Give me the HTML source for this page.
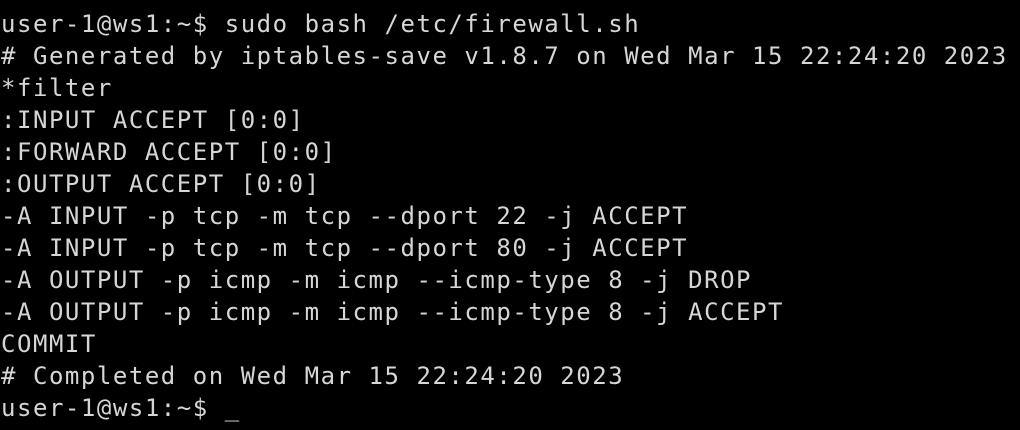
<!DOCTYPE html>
<html><head><meta charset="utf-8"><style>
html,body{margin:0;padding:0;background:#000;width:1020px;height:430px;overflow:hidden}
pre{margin:0;padding:8px 0 0 1px;font-family:"DejaVu Sans Mono","Liberation Mono",monospace;font-size:24px;letter-spacing:1.53px;line-height:32px;color:#d6d6d6;white-space:pre}
</style></head><body><pre>user-1@ws1:~$ sudo bash /etc/firewall.sh
# Generated by iptables-save v1.8.7 on Wed Mar 15 22:24:20 2023
*filter
:INPUT ACCEPT [0:0]
:FORWARD ACCEPT [0:0]
:OUTPUT ACCEPT [0:0]
-A INPUT -p tcp -m tcp --dport 22 -j ACCEPT
-A INPUT -p tcp -m tcp --dport 80 -j ACCEPT
-A OUTPUT -p icmp -m icmp --icmp-type 8 -j DROP
-A OUTPUT -p icmp -m icmp --icmp-type 8 -j ACCEPT
COMMIT
# Completed on Wed Mar 15 22:24:20 2023
user-1@ws1:~$ _</pre></body></html>
